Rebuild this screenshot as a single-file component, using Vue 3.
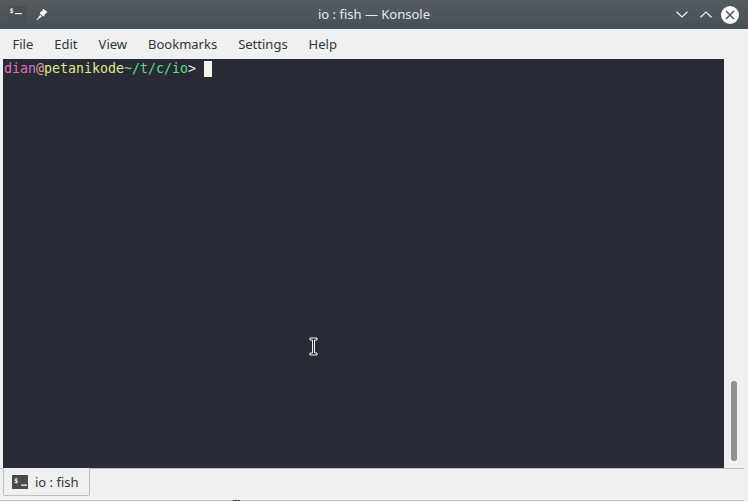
<script setup>
const menus = ['File', 'Edit', 'View', 'Bookmarks', 'Settings', 'Help']
</script>

<template>
  <div class="window">
    <header class="titlebar">
      <div class="title-left">
        <svg class="app-icon" width="18" height="16" viewBox="0 0 18 16">
          <rect width="18" height="16" rx="1" fill="#4c4e50" />
          <text x="1.5" y="7" class="dollar">$</text>
          <rect x="7" y="7" width="7" height="1.2" fill="#f2f2f2" />
        </svg>
        <svg class="pin" width="12" height="13" viewBox="0 0 12 13">
          <path d="M7.5 0.8 L11.3 4 L10 5.6 L9 5.8 L8.6 7.6 L7.2 8.6 L3.8 5.4 L4.8 3.6 L6.4 3 L6.5 1.8 Z M4.2 6.8 L5.8 8.4 L3 10.6 L0.8 12.4 L0.4 12 L2.2 9.4 Z" fill="#f4f5f5" />
        </svg>
      </div>
      <div class="title">io : fish — Konsole</div>
      <div class="controls">
        <svg class="chev-down" width="12" height="7" viewBox="0 0 12 7"><path d="M0.5 0.8 L6 6 L11.5 0.8" fill="none" stroke="#f0f1f2" stroke-width="1.2" /></svg>
        <svg class="chev-up" width="12" height="7" viewBox="0 0 12 7"><path d="M0.5 6.2 L6 1 L11.5 6.2" fill="none" stroke="#f0f1f2" stroke-width="1.2" /></svg>
        <svg width="18" height="18" viewBox="0 0 18 18">
          <circle cx="9" cy="9" r="9" fill="#fcfcfc" />
          <path d="M5 5 L13 13 M13 5 L5 13" stroke="#4a5259" stroke-width="1.5" />
        </svg>
      </div>
    </header>

    <nav class="menubar">
      <span v-for="m in menus" :key="m" class="menu-item">{{ m }}</span>
    </nav>

    <main class="content">
      <section class="terminal">
        <div class="prompt"><span class="c-pink">dia</span><span class="c-mag">n</span><span class="c-at">@</span><span class="c-yellow">petanikode</span><span class="c-green">~/t/c/io</span><span class="c-white">&gt; </span><span class="cursor"></span></div>
        <svg class="ibeam" width="9" height="19" viewBox="0 0 9 19">
          <path d="M1 1 H8 V3 H5.5 V16 H8 V18 H1 V16 H3.5 V3 H1 Z" fill="#23262e" stroke="#f4f4f4" stroke-width="1" />
        </svg>
      </section>
      <aside class="scrollbar"><div class="thumb"></div></aside>
    </main>

    <footer class="tabbar">
      <div class="tab">
        <svg width="16" height="14" viewBox="0 0 16 14">
          <rect width="16" height="14" fill="#4a4a4a" />
          <text x="2" y="8" class="dollar">$</text>
          <rect x="9" y="9.5" width="6" height="1.3" fill="#f2f2f2" />
        </svg>
        <span class="tab-label">io : fish</span>
      </div>
    </footer>
    <div class="edge-mark"></div>
  </div>
</template>

<style scoped>
.window {
  width: 748px;
  height: 501px;
  display: flex;
  flex-direction: column;
  background: #eff0f1;
  font-family: "Noto Sans", sans-serif;
  overflow: hidden;
  position: relative;
}
.titlebar {
  height: 29px;
  flex: none;
  display: flex;
  align-items: center;
  justify-content: space-between;
  padding: 0 9px 0 8px;
  position: relative;
  background: linear-gradient(#535c63, #475057);
}
.title-left {
  display: flex;
  align-items: center;
  gap: 10px;
}
.app-icon {
  display: block;
  margin-bottom: 2px;
}
.pin {
  display: block;
  margin-bottom: 1px;
}
.dollar {
  font-family: "DejaVu Sans Mono", monospace;
  font-size: 7px;
  font-weight: 700;
  fill: #f2f2f2;
}
.title {
  position: absolute;
  left: 0;
  right: 0;
  top: 5px;
  text-align: center;
  font-size: 13px;
  line-height: 18px;
  color: #e6e8e9;
  pointer-events: none;
}
.controls {
  display: flex;
  align-items: center;
  gap: 12px;
}
.chev-up { margin-right: -3px; }
.menubar {
  height: 30px;
  flex: none;
  display: flex;
  align-items: center;
  gap: 21px;
  padding: 0 12.5px;
  font-size: 13px;
  color: #31363b;
}
.content {
  height: 409px;
  flex: none;
  display: flex;
  padding-left: 3px;
}
.terminal {
  width: 721px;
  background: #282b36;
  position: relative;
  padding: 1px 0 0 1px;
  box-sizing: border-box;
}
.prompt {
  display: flex;
  height: 18px;
  line-height: 18px;
  font-family: "DejaVu Sans Mono", monospace;
  font-size: 13.3px;
  letter-spacing: -0.01px;
  white-space: pre;
}
.c-pink { color: #e56fb4; }
.c-mag { color: #c878d8; }
.c-at { color: #e49f86; }
.c-yellow { color: #dfe58a; }
.c-green { color: #5fd88a; }
.c-white { color: #eceff1; }
.cursor {
  width: 8px;
  height: 16px;
  margin-top: 1px;
  background: #f6f5ea;
}
.ibeam {
  position: absolute;
  left: 306px;
  top: 278px;
}
.scrollbar {
  flex: 1;
  padding: 322px 0 0 7px;
}
.thumb {
  width: 6px;
  height: 80px;
  border-radius: 3px;
  background: #8f9192;
}
.tabbar {
  flex: 1;
  border-top: 1px solid #bcbebf;
  border-bottom: 1px solid #bcbebf;
  margin-right: 4px;
  padding-left: 3px;
  box-sizing: border-box;
}
.tab {
  width: 87px;
  height: 28px;
  margin-top: -1px;
  box-sizing: border-box;
  display: flex;
  align-items: center;
  gap: 7px;
  padding-left: 8px;
  background: #eff0f1;
  border: 1px solid #bcbebf;
  border-top-color: #eff0f1;
  border-radius: 0 0 2px 2px;
  font-size: 13px;
  color: #31363b;
}
.edge-mark {
  position: absolute;
  left: 233px;
  bottom: 0;
  width: 7px;
  height: 1px;
  background: #4c4a48;
}
</style>
